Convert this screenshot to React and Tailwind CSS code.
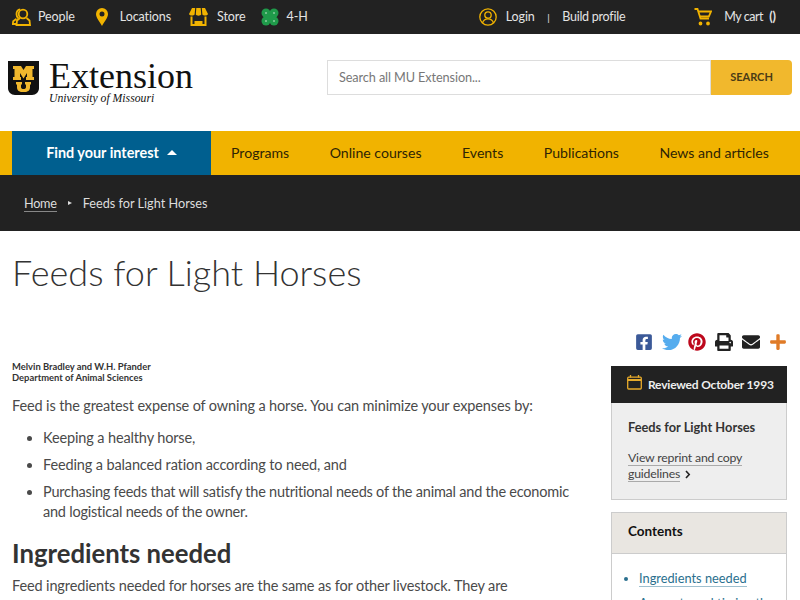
import React from 'react';
import { FaFacebookSquare, FaTwitter, FaPinterest, FaPrint, FaEnvelope, FaPlus } from 'react-icons/fa';

const PeopleIcon = () => (
  <svg width="19" height="18" viewBox="0 0 19 18" fill="none" stroke="#f1b300" strokeWidth="1.8">
    <path d="M6.500 10.500c-1.200-1-2-2.500-2-4.300C4.500 3.500 6 1.500 8.200 1.300" />
    <path d="M4.500 10.800 1.200 13.200.8 16h3.500" />
    <circle cx="11" cy="6" r="4.300" />
    <path d="M8 10l-3 2.500-.5 4.500h13.500l-.5-4.500-3-2.500" />
  </svg>
);

const PinIcon = () => (
  <svg width="12" height="18" viewBox="0 0 12 18">
    <path fillRule="evenodd" fill="#f1b300" d="M6 0a6 6 0 0 1 6 6c0 4-4 8-6 12C4 14 0 10 0 6a6 6 0 0 1 6-6zm0 3.500a2.500 2.500 0 1 0 0 5 2.500 2.500 0 0 0 0-5z" />
  </svg>
);

const StoreIcon = () => (
  <svg width="19" height="18" viewBox="0 0 19 18">
    <path fill="#f1b300" d="M3 0h3.200L5.600 6.500C4.500 8 .8 8 0 6zM7.300 0h4.400l.5 6.500c-.8 1.500-4.600 1.500-5.400 0zM12.800 0H16l3 6c-.8 2-4.500 2-5.600.5z" />
    <path fill="none" stroke="#f1b300" strokeWidth="2" d="M2.500 8.500V17h14V8.500" />
    <path fill="#f1b300" d="M5.500 13h8v4h-8z" />
  </svg>
);

const CloverIcon = () => (
  <svg width="18" height="18" viewBox="0 0 18 18">
    <g fill="#1f9a4a">
      <circle cx="5" cy="5" r="4.500" />
      <circle cx="13" cy="5" r="4.500" />
      <circle cx="5" cy="13" r="4.500" />
      <circle cx="13" cy="13" r="4.500" />
      <rect x="5" y="5" width="8" height="8" />
    </g>
    <g fill="#d8f0dd">
      <circle cx="5" cy="5" r=".8" />
      <circle cx="13" cy="5" r=".8" />
      <circle cx="5" cy="13" r=".8" />
      <circle cx="13" cy="13" r=".8" />
    </g>
  </svg>
);

const UserIcon = () => (
  <svg width="18" height="18" viewBox="0 0 18 18" fill="none" stroke="#f1b300" strokeWidth="1.300">
    <circle cx="9" cy="9" r="8.200" />
    <circle cx="9" cy="7" r="3.200" />
    <path d="M3.500 15c.8-3 3-4.200 5.500-4.200s4.700 1.200 5.500 4.200" />
  </svg>
);

const CartIcon = () => (
  <svg width="18" height="18" viewBox="0 0 18 18" fill="none" stroke="#f1b300" strokeWidth="1.800">
    <path d="M.5 1h3l3 9.500h8.500" />
    <path d="M4.500 3.500H17l-2.200 5H6" />
    <circle cx="6.500" cy="15.500" r="1" fill="#f1b300" />
    <circle cx="14" cy="15.500" r="1" fill="#f1b300" />
  </svg>
);

const CalendarIcon = () => (
  <svg width="15" height="15" viewBox="0 0 15 15" fill="none" stroke="#e7ab2b" strokeWidth="1.300">
    <rect x=".7" y="2.200" width="13.600" height="11.800" rx="1" />
    <path d="M.7 5h13.600" strokeWidth="2" />
    <path d="M3.500 0v2.500M11.500 0v2.500" />
  </svg>
);

const ShieldLogo = () => (
  <svg width="31" height="34" viewBox="0 0 31 34">
    <path fill="#111" d="M0 0h31v27c0 4-3 7-7 7H7c-4 0-7-3-7-7z" />
    <path fill="#f1b82d" d="M5 5h8l2.500 4L18 5h8v3h-1.500v8H26v3h-8v-3h1v-4l-3.500 5.500L12 12v4h1v3H5v-3h1.500V8H5z" />
    <path fill="#f1b82d" d="M8 21h6v2.500h-1v2.500c0 1.500 1 2 2.500 2s2.500-.5 2.500-2v-2.500h-1V21h6v2.500h-1v3c0 3-2.500 4.500-5 4.500h-3c-2.500 0-5-1.500-5-4.500v-3H8z" />
  </svg>
);

const TopLink = ({ icon, label, className }) => (
  <a className={`flex items-center text-[12.500px] tracking-[-0.1px] text-[#e4e4e4] ${className}`}>
    {icon}
    <span>{label}</span>
  </a>
);

const navItems = ['Programs', 'Online courses', 'Events', 'Publications', 'News and articles'];

const App = () => {
  return (
    <div className="h-[600px] w-[800px] overflow-hidden bg-white text-[#4a4a4a] font-['Lato',sans-serif]">
      {/* Top utility bar */}
      <div className="flex h-[34px] items-center justify-between bg-[#222] pl-3 pr-6">
        <div className="flex items-center">
          <TopLink icon={<PeopleIcon />} label="People" className="gap-[7px]" />
          <TopLink icon={<PinIcon />} label="Locations" className="ml-[21px] gap-3" />
          <TopLink icon={<StoreIcon />} label="Store" className="ml-[18px] gap-[9px]" />
          <TopLink icon={<CloverIcon />} label="4-H" className="ml-4 gap-[7px]" />
        </div>
        <div className="flex items-center">
          <TopLink icon={<UserIcon />} label="Login" className="gap-[9px]" />
          <span className="mx-[12.500px] text-[10px] text-[#e4e4e4]">|</span>
          <span className="mr-[69px] text-[12.500px] tracking-[-0.25px] text-[#e4e4e4]">Build profile</span>
          <a className="flex items-center gap-3 text-[12.500px] tracking-[-0.45px] text-[#e4e4e4]">
            <CartIcon />
            <span>My cart</span>
          </a>
          <span className="ml-[6px] text-[12.500px] font-bold text-[#e4e4e4]">()</span>
        </div>
      </div>

      {/* Logo and search */}
      <div className="flex h-[97px] items-start justify-between pl-2 pr-2">
        <div className="mt-[27px] flex items-start gap-2.5">
          <ShieldLogo />
          <div className="font-['Liberation_Serif',serif] text-[#111]">
            <div className="-mt-[3px] text-[36px] leading-[36px]">Extension</div>
            <div className="text-[11.700px] italic leading-[10px]">University of Missouri</div>
          </div>
        </div>
        <div className="mt-[26px] flex h-[35px] w-[465px]">
          <div className="flex flex-1 items-center border border-[#ddd] pl-[11px] pr-3 text-[12.700px] tracking-[-0.1px] text-[#777]">Search all MU Extension...</div>
          <button className="w-[81px] rounded-r-sm bg-[#f1b82d] text-[11px] font-bold text-[#4a3b16]">SEARCH</button>
        </div>
      </div>

      {/* Main nav */}
      <div className="flex h-[44px] items-center bg-[#f1b300] pl-3">
        <div className="flex h-full w-[199px] items-center justify-center gap-2 bg-[#005f8f] text-[14.400px] font-bold text-white">
          Find your interest
          <span className="mb-0.5 h-0 w-0 border-x-[5px] border-b-[5px] border-x-transparent border-b-white" />
        </div>
        <div className="flex items-center gap-[40.500px] pl-5 text-[14.100px] text-[#2e2404]">
          {navItems.map((item) => (
            <span key={item}>{item}</span>
          ))}
        </div>
      </div>

      {/* Breadcrumb */}
      <div className="flex h-[56px] items-center gap-[11px] bg-[#222] pl-6 text-[12.700px] text-[#ddd]">
        <span className="border-b border-[#888] leading-4 tracking-[-0.3px]">Home</span>
        <span className="h-0 w-0 border-y-[2.500px] border-l-[4px] border-y-transparent border-l-[#ddd]" />
        <span className="pt-px">Feeds for Light Horses</span>
      </div>

      {/* Title */}
      <h1 className="pl-3 pt-[19px] text-[36px] font-light leading-[44px] text-[#333]">Feeds for Light Horses</h1>

      {/* Share icons */}
      <div className="mt-[38px] flex items-center justify-end pr-[13.500px] text-[18px]">
        <FaFacebookSquare className="text-[#3b5998]" />
        <FaTwitter className="ml-[8.500px] text-[20px] text-[#55acee]" />
        <FaPinterest className="ml-[6.500px] text-[#bd081c]" />
        <FaPrint className="ml-[9px] text-[#222]" />
        <FaEnvelope className="ml-[8.500px] text-[#222]" />
        <FaPlus className="ml-[9px] text-[#e07b27]" />
      </div>

      <div className="mt-[14px] flex items-start justify-between pl-3 pr-[13px]">
        {/* Article */}
        <div className="w-[580px]">
          <div className="mt-[-5px] text-[9.400px] font-bold leading-[11px] text-[#333]">
            <div>Melvin Bradley and W.H. Pfander</div>
            <div>Department of Animal Sciences</div>
          </div>
          <p className="mt-[13px] text-[14.500px] leading-[20px] tracking-[-0.13px]">Feed is the greatest expense of owning a horse. You can minimize your expenses by:</p>
          <ul className="mt-[8px] list-disc pl-[31px] text-[14.500px] leading-[27px] tracking-[-0.13px]">
            <li>Keeping a healthy horse,</li>
            <li>Feeding a balanced ration according to need, and</li>
            <li className="pt-[4px] leading-[20px] tracking-[-0.22px]">Purchasing feeds that will satisfy the nutritional needs of the animal and the economic and logistical needs of the owner.</li>
          </ul>
          <h2 className="mt-[15px] text-[25.700px] font-bold leading-[32px] text-[#333]">Ingredients needed</h2>
          <p className="mt-[7px] text-[14.500px] leading-[20px] tracking-[-0.13px]">Feed ingredients needed for horses are the same as for other livestock. They are</p>
        </div>

        {/* Sidebar */}
        <div className="w-[176px] shrink-0">
          <div className="flex h-[37px] items-center gap-[6px] whitespace-nowrap bg-[#222] pl-4 text-[12px] font-bold tracking-[-0.2px] text-[#eee]">
            <span className="-mt-1"><CalendarIcon /></span>
            Reviewed October 1993
          </div>
          <div className="h-[97px] border border-t-0 border-[#ccc] bg-[#eee] px-4 pt-4 text-[12.300px] leading-4">
            <div className="text-[12.800px] font-bold text-[#333]">Feeds for Light Horses</div>
            <div className="mt-[15px] tracking-[-0.2px] text-[#444]">
              <span className="border-b border-[#aaa]">View reprint and copy</span>
              <br />
              <span className="border-b border-[#aaa]">guidelines</span>
              <svg className="ml-[5px] inline-block" width="6" height="9" viewBox="0 0 6 9" fill="none" stroke="#222" strokeWidth="1.600">
                <path d="M1 1l3.200 3.500L1 8" />
              </svg>
            </div>
          </div>
          <div className="mt-3 border border-[#ccc]">
            <div className="flex h-[41px] items-center border-b border-[#ccc] bg-[#e9e6e1] px-4 pb-1 text-[13.500px] font-bold text-[#111]">Contents</div>
            <ul className="list-disc pl-[27px] pr-2 pt-[11px] text-[12.800px] leading-[27px] text-[#2a6f8e]">
              <li><span className="border-b border-[#9fc0cf]">Ingredients needed</span></li>
              <li className="-mt-[2px]">Amounts and timing the</li>
            </ul>
          </div>
        </div>
      </div>
    </div>
  );
};

export default App;
